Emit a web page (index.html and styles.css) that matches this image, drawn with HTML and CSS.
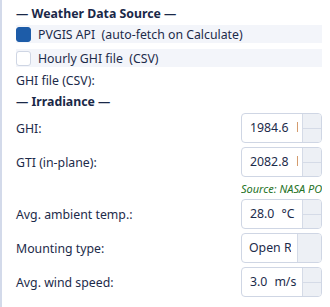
FILE: index.html
```html
<!DOCTYPE html>
<html lang="en">
<head>
    <meta charset="UTF-8">
    <meta name="viewport" content="width=device-width, initial-scale=1.0">
    <title>Weather Data</title>
    <link rel="stylesheet" href="styles.css">
</head>
<body>
<div class="panel">
    <div class="section-title">— Weather Data Source —</div>

    <div class="option checked">
        <span class="check"></span>
        <span class="option-text">PVGIS API&nbsp; (auto-fetch on Calculate)</span>
    </div>
    <div class="option">
        <span class="check"></span>
        <span class="option-text">Hourly GHI file&nbsp; (CSV)</span>
    </div>

    <div class="plain-label">GHI file (CSV):</div>

    <div class="section-title">— Irradiance —</div>

    <div class="form-row">
        <label class="field-label">GHI:</label>
        <div class="spinbox">
            <div class="spin-value"><span>1984.6</span><span class="suffix">kWh/m²</span></div>
            <div class="spin-buttons"><span></span><span></span></div>
        </div>
    </div>
    <div class="form-row">
        <label class="field-label">GTI (in-plane):</label>
        <div class="spinbox">
            <div class="spin-value"><span>2082.8</span><span class="suffix">kWh/m²</span></div>
            <div class="spin-buttons"><span></span><span></span></div>
        </div>
    </div>
    <div class="source-note">Source: NASA POWER</div>

    <div class="form-row">
        <label class="field-label">Avg. ambient temp.:</label>
        <div class="spinbox">
            <div class="spin-value"><span>28.0</span><span class="unit">°C</span></div>
            <div class="spin-buttons"><span></span><span></span></div>
        </div>
    </div>
    <div class="form-row">
        <label class="field-label">Mounting type:</label>
        <div class="combobox">
            <div class="combo-value">Open Rack</div>
            <div class="combo-arrow"></div>
        </div>
    </div>
    <div class="form-row">
        <label class="field-label">Avg. wind speed:</label>
        <div class="spinbox">
            <div class="spin-value"><span>3.0</span><span class="unit">m/s</span></div>
            <div class="spin-buttons"><span></span><span></span></div>
        </div>
    </div>
</div>
</body>
</html>
```

FILE: styles.css
```css
/* Weather settings panel */
body {
    margin: 0;
    background: #ffffff;
    font-family: "Noto Sans", "Open Sans", sans-serif;
    font-size: 12.3px;
    color: #1c2b4a;
}

.panel {
    border-left: 2px solid #d3daea;
    height: 307px;
    box-sizing: border-box;
    padding: 5px 8px 0 14px;
    display: flex;
    flex-direction: column;
}

.section-title {
    font-weight: bold;
    height: 18px;
    line-height: 18px;
    color: #1a2848;
}

/* Checkbox options */
.option {
    display: flex;
    align-items: center;
    gap: 7px;
    height: 18px;
    margin-top: 2px;
    margin-bottom: 4px;
    background-color: #f3f5fa;
}

.option .check {
    width: 13px;
    height: 13px;
    border: 1px solid #cfd6e4;
    border-radius: 3px;
    background: #ffffff;
    flex-shrink: 0;
}

.option.checked .check {
    background: #1d5ca8;
    border-color: #1d5ca8;
}

.option-text {
    white-space: pre;
}

.plain-label {
    height: 18px;
    line-height: 18px;
    margin-top: 1px;
    margin-bottom: 3px;
}

/* Label + field rows */
.form-row {
    display: flex;
    align-items: center;
    justify-content: space-between;
    height: 30px;
    margin-top: 4px;
}

.section-title + .form-row {
    margin-top: 2px;
}

.spinbox,
.combobox {
    width: 81px;
    height: 30px;
    box-sizing: border-box;
    border: 1px solid #cfd6e4;
    border-radius: 4px;
    background: #ffffff;
    display: flex;
    overflow: hidden;
}

.spin-value {
    flex: 1;
    padding-left: 8px;
    line-height: 28px;
    white-space: nowrap;
    overflow: hidden;
    margin-right: 4px;
}

.spin-value .suffix {
    margin-left: 8px;
}

.spin-value .unit {
    margin-left: 7px;
}

.spin-buttons {
    width: 18px;
    border-left: 1px solid #d5dbe7;
    background: #edf0f5;
    display: flex;
    flex-direction: column;
}

.spin-buttons span {
    flex: 1;
}

.spin-buttons span:first-child {
    border-bottom: 1px solid #d5dbe7;
}

.combo-value {
    flex: 1;
    padding-left: 7px;
    margin-right: 6px;
    line-height: 28px;
    white-space: nowrap;
    overflow: hidden;
}

.combo-arrow {
    width: 23px;
    border-left: 1px solid #d5dbe7;
    background: #edf0f5;
}

.source-note {
    align-self: flex-end;
    width: 81px;
    white-space: nowrap;
    overflow: hidden;
    font-style: italic;
    font-size: 11px;
    color: #267326;
    height: 18px;
    line-height: 18px;
    margin-top: 3px;
    margin-bottom: -3px;
}
```
